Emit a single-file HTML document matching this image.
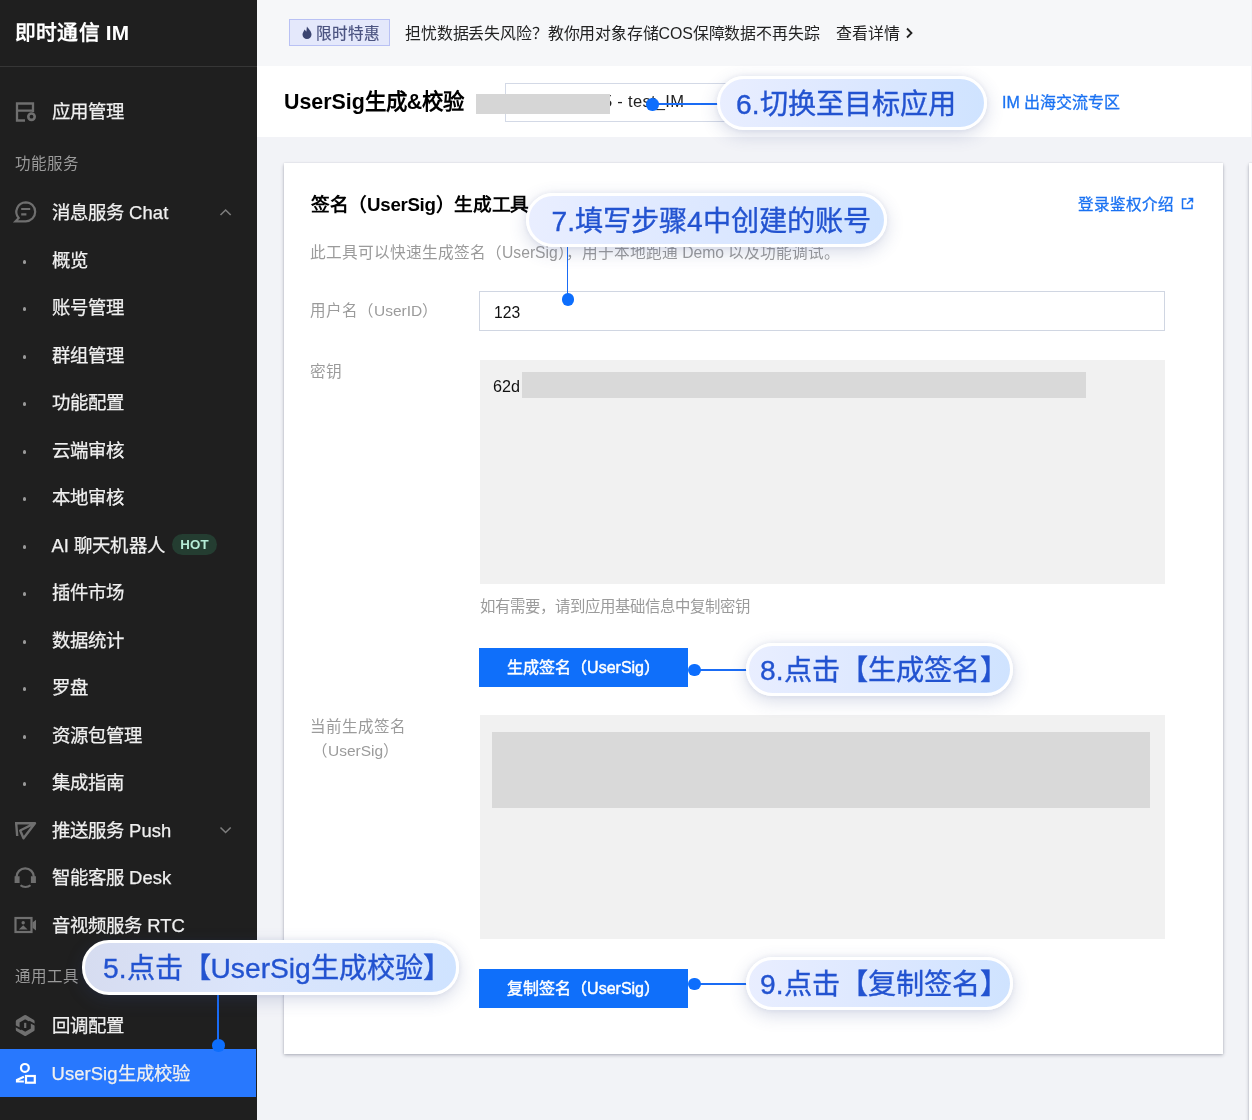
<!DOCTYPE html>
<html lang="zh-CN">
<head>
<meta charset="utf-8">
<title>UserSig</title>
<style>
*{box-sizing:border-box;margin:0;padding:0}
html,body{width:1252px;height:1120px;overflow:hidden}
body{font-family:"Liberation Sans",sans-serif;background:#f2f3f7;position:relative;color:#000}
.abs{position:absolute}
#root{position:absolute;left:0;top:0;width:1252px;height:1120px;will-change:transform}
/* sidebar */
#side{position:absolute;left:0;top:0;width:257px;height:1120px;background:#1f1f1f;color:#fff}
#side .title{position:absolute;left:15px;top:19px;font-size:20.8px;font-weight:bold;line-height:28px;letter-spacing:.2px}
#side .hr{position:absolute;left:0;top:66px;width:257px;height:1px;background:#363636}
.mi{position:absolute;left:51.500px;margin-top:.5px;letter-spacing:.1px;font-size:18.4px;-webkit-text-stroke:.25px #f0f0f0;line-height:24px;color:#f0f0f0;white-space:nowrap;transform:translateY(-50%)}
.grp{position:absolute;left:15px;font-size:15.5px;line-height:20px;color:#9a9a9a;transform:translateY(-50%)}
.dot{position:absolute;left:22.500px;margin-top:.8px;width:3.800px;height:3.800px;border-radius:50%;background:#9a9a9a}
.ico{position:absolute;left:14px}
#sel{position:absolute;left:0;top:1049px;width:256px;height:48px;background:#2878fe}
.hot{display:inline-block;vertical-align:2px;margin-left:8px;background:#1e4d3c;color:#d8f5e6;font-size:11px;font-weight:bold;line-height:19px;height:19px;padding:0 7px;border-radius:10px;letter-spacing:.3px}
/* top */
#banner{position:absolute;left:257px;top:0;width:994px;height:66px;background:#f6f7f9}
#head{position:absolute;left:257px;top:66px;width:994px;height:71px;background:#fff}
#card{position:absolute;left:284px;top:163px;width:939px;height:891px;background:#fff;box-shadow:0 1.5px 3.5px rgba(30,35,60,.30),0 0 2px rgba(30,35,60,.12)}
.t{position:absolute;white-space:nowrap;transform:translateY(-50%)}
.gray{color:#9b9b9b}
.blue{color:#1a72f2}
.pill{position:absolute;border-radius:27px;background:linear-gradient(95deg,#e9eeff 0%,#dbe7ff 55%,#cfe3ff 100%);border:3px solid #fff;box-shadow:0 5px 18px rgba(55,75,140,.20),0 0 6px rgba(55,75,140,.08);color:#2353d0;font-size:28.2px;white-space:nowrap;text-align:left;-webkit-text-stroke:.35px #2353d0}
.btn{position:absolute;background:#0f6ffa;color:#fff;font-size:16px;text-align:center;-webkit-text-stroke:.45px #fff}
.ln{position:absolute;background:#1a6cf5}
.pt{position:absolute;width:12.5px;height:12.5px;border-radius:50%;background:#0d6efd}
</style>
</head>
<body>
<div id="root">
<div id="banner"></div>
<div id="head"></div>
<div id="card"></div>

<!-- banner -->
<div class="abs" style="left:289px;top:19px;width:101px;height:27px;background:#e4e8fb;border:1px solid #b9c1f4"></div>
<svg class="abs" style="left:301px;top:26px" width="12" height="14" viewBox="0 0 12 14"><path d="M6 .5C7.500 3 10.500 5 10.500 8.500A4.500 4.500 0 0 1 1.500 8.500C1.500 6.500 3 5.500 3.500 3.500 4.500 4.500 5 5 5.200 5.800 5.800 4 5.500 2 6 .5z" fill="#3b4470"/></svg>
<div class="t" style="left:316px;top:32px;font-size:15.6px;color:#4b5380;-webkit-text-stroke:.2px #4b5380">限时特惠</div>
<div class="t" style="left:405px;top:32px;font-size:15.93px;letter-spacing:-.15px;color:#222">担忧数据丢失风险？教你用对象存储COS保障数据不再失踪</div>
<div class="t" style="left:836px;top:32px;font-size:15.93px;color:#222">查看详情</div>
<svg class="abs" style="left:904px;top:26px" width="10" height="14" viewBox="0 0 10 14" fill="none" stroke="#222" stroke-width="1.800"><path d="M3 2.500l4.500 4.500L3 11.500"/></svg>
<!-- head -->
<div class="t" style="left:284px;top:98.5px;font-size:21.4px;font-weight:bold;color:#000">UserSig生成&amp;校验</div>
<div class="abs" style="left:505px;top:83px;width:240px;height:39px;background:#fff;border:1px solid #d3d9e6"></div>
<div class="t" style="left:603px;top:101px;font-size:16.5px;letter-spacing:.3px;color:#222">5 - test_IM</div>
<div class="abs" style="left:476px;top:94px;width:134px;height:20px;background:#d6d6d6"></div>
<div class="t blue" style="left:1002px;top:100.500px;font-size:16px;-webkit-text-stroke:.3px #1a72f2">IM 出海交流专区</div>
<!-- card -->
<div class="t" style="left:311px;top:202px;font-size:18.7px;letter-spacing:-.3px;font-weight:bold;color:#000">签名（UserSig）生成工具</div>
<div class="t blue" style="left:1078px;top:203px;font-size:15.5px;-webkit-text-stroke:.3px #1a72f2">登录鉴权介绍</div>
<svg class="abs" style="left:1181px;top:197px" width="13" height="13" viewBox="0 0 13 13" fill="none" stroke="#1a72f2" stroke-width="1.500"><path d="M5.500 2H1.500v9.500H11V7.500M7.500 1.500H11.500V5.500M11.500 1.500L6 7"/></svg>
<div class="t gray" style="left:310px;top:250.5px;font-size:15.7px">此工具可以快速生成签名（UserSig），用于本地跑通 Demo 以及功能调试。</div>
<div class="t gray" style="left:310px;top:308.500px;font-size:15.5px">用户名（UserID）</div>
<div class="abs" style="left:479px;top:291px;width:686px;height:40px;background:#fff;border:1px solid #d0d6e2"></div>
<div class="t" style="left:494px;top:313px;font-size:15.700px;color:#111">123</div>
<div class="t gray" style="left:310px;top:370px;font-size:15.7px">密钥</div>
<div class="abs" style="left:480px;top:360px;width:685px;height:224px;background:#f1f1f1"></div>
<div class="t" style="left:493px;top:385.500px;font-size:16.200px;color:#111">62d</div>
<div class="abs" style="left:522px;top:372px;width:564px;height:26px;background:#d9d9d9"></div>
<div class="t gray" style="left:480px;top:605px;font-size:15.400px">如有需要，请到应用基础信息中复制密钥</div>
<div class="btn" style="left:479.300px;top:647.800px;width:208.500px;height:39.300px;line-height:39px">生成签名（UserSig）</div>
<div class="t gray" style="left:310px;top:725px;font-size:15.5px">当前生成签名</div>
<div class="t gray" style="left:312px;top:749px;font-size:15.5px">（UserSig）</div>
<div class="abs" style="left:480px;top:715px;width:685px;height:224px;background:#f1f1f1"></div>
<div class="abs" style="left:492px;top:732px;width:658px;height:75.700px;background:#d9d9d9"></div>
<div class="btn" style="left:479.300px;top:968.600px;width:208.500px;height:39.300px;line-height:39px">复制签名（UserSig）</div>
<!-- right strip -->
<div class="abs" style="left:1249px;top:163px;width:20px;height:980px;background:#fff;box-shadow:0 1.5px 3.5px rgba(30,35,60,.30),0 0 2px rgba(30,35,60,.12)"></div>
<!-- annotations -->
<div class="ln" style="left:652px;top:103.300px;width:66px;height:1.500px"></div><div class="pt" style="left:646px;top:98px"></div>
<div class="pill" style="left:717px;top:76px;width:270px;height:54px;line-height:50px;padding-left:16px">6.切换至目标应用</div>
<div class="ln" style="left:566.800px;top:245px;width:1.500px;height:54px"></div><div class="pt" style="left:561.500px;top:293px"></div>
<div class="pill" style="left:526px;top:192.500px;width:361px;height:54px;line-height:50px;padding-left:22.500px">7.填写步骤4中创建的账号</div>
<div class="ln" style="left:694px;top:669px;width:53px;height:1.500px"></div><div class="pt" style="left:688px;top:663.500px"></div>
<div class="pill" style="left:746px;top:642.500px;width:267px;height:53px;line-height:49px;padding-left:11px">8.点击【生成签名】</div>
<div class="ln" style="left:694px;top:983.200px;width:53px;height:1.500px"></div><div class="pt" style="left:688px;top:977.800px"></div>
<div class="pill" style="left:746px;top:956.500px;width:267px;height:53px;line-height:49px;padding-left:11px">9.点击【复制签名】</div>
<div id="side">
  <div class="title">即时通信 IM</div>
  <div class="hr"></div>
<div class="mi" style="top:111px">应用管理</div>
<div class="grp" style="top:164px">功能服务</div>
<div class="mi" style="top:212px">消息服务 Chat</div>
<div class="dot" style="top:259px"></div><div class="mi" style="top:260px">概览</div>
<div class="dot" style="top:306px"></div><div class="mi" style="top:307px">账号管理</div>
<div class="dot" style="top:354px"></div><div class="mi" style="top:355px">群组管理</div>
<div class="dot" style="top:401px"></div><div class="mi" style="top:402px">功能配置</div>
<div class="dot" style="top:449px"></div><div class="mi" style="top:450px">云端审核</div>
<div class="dot" style="top:496px"></div><div class="mi" style="top:497px">本地审核</div>
<div class="dot" style="top:544px"></div><div class="mi" style="top:545px">AI 聊天机器人</div>
<div class="dot" style="top:591px"></div><div class="mi" style="top:592px">插件市场</div>
<div class="dot" style="top:639px"></div><div class="mi" style="top:640px">数据统计</div>
<div class="dot" style="top:686px"></div><div class="mi" style="top:687px">罗盘</div>
<div class="dot" style="top:734px"></div><div class="mi" style="top:735px">资源包管理</div>
<div class="dot" style="top:781px"></div><div class="mi" style="top:782px">集成指南</div>
<div class="mi" style="top:830px">推送服务 Push</div>
<div class="mi" style="top:877px">智能客服 Desk</div>
<div class="mi" style="top:925px">音视频服务 RTC</div>
<div class="grp" style="top:977px">通用工具</div>
<div class="mi" style="top:1025px">回调配置</div>
<div class="abs" style="left:172px;top:533.500px;width:45px;height:21.600px;border-radius:11px;background:#243d31;color:#b5ecd6;font-size:13.300px;font-weight:bold;line-height:21.600px;text-align:center;letter-spacing:.2px">HOT</div>
<div id="sel"></div><svg class="abs" style="left:0;top:1049px" width="60" height="48" viewBox="0 1049 60 48" fill="none" stroke="#fff" stroke-width="2.200">
<circle cx="24.900" cy="1067.900" r="3.900"/><path d="M23.900 1076.800L17 1080v1.500h6.900"/><rect x="26" y="1076" width="8.800" height="6.700"/></svg>
<div class="mi" style="top:1073px">UserSig生成校验</div>
<svg class="abs" style="left:0;top:0" width="257" height="1120" viewBox="0 0 257 1120" fill="none" stroke="#6f6f6f" stroke-width="2.300">
<path d="M25 120.500H17V103.500h16V112M17 110.700h16"/><circle cx="31.500" cy="116.700" r="3.200" stroke-width="2.600"/>
<path d="M25.700 202.300a9.500 9.500 0 1 1 0 19H15.500l3.200-3.300A9.500 9.500 0 0 1 25.700 202.300z" stroke-width="2.200"/><path d="M21.200 209h9M21.200 214.400h5.200" stroke-width="2.200"/>
<path d="M220.500 215l5.100-5 5.100 5" stroke="#7d7d7d" stroke-width="1.600"/>
<path d="M220.500 827.500l5.100 5 5.100-5" stroke="#7d7d7d" stroke-width="1.600"/>
<path d="M15 823.200H35L23.500 838.300L20.200 830.500L35 823.200M16.200 823.500l1 12.500" stroke-width="2.400" stroke-linejoin="round"/>
<path d="M16.500 878v-1a8.700 8.700 0 0 1 17.400 0v1" stroke-width="2.200"/><path d="M14.600 876.300h5v6.600h-5zM30.900 876.300h5v6.600h-5z" fill="#6f6f6f" stroke="none"/><path d="M20.500 885.300c2.500 2.200 7.500 2.200 10 0" stroke-width="2"/>
<rect x="15.500" y="918" width="16" height="14" stroke-width="2.200"/><path d="M32.500 922.500l3.500-2.800v10.800l-3.500-2.800z" fill="#6f6f6f" stroke="none"/><circle cx="23.200" cy="922.800" r="1.700" fill="#6f6f6f" stroke="none"/><path d="M18.800 929.500l4.400-4.200 4.400 4.200z" fill="#6f6f6f" stroke="none"/>
<path d="M25.200 1017l7.500 4.300v8.400l-7.500 4.300-7.500-4.300v-8.400z" stroke-width="3.800" stroke-linejoin="round"/><path d="M25.200 1022.800v5.200" stroke-width="2.200"/><path d="M14.500 1025.800l7 3.600M29 1021.600l7 3.600" stroke="#202020" stroke-width="1.800"/>
</svg>
</div>

<div class="ln" style="left:217.300px;top:993px;width:1.500px;height:52px"></div><div class="pt" style="left:212px;top:1039px"></div>
<div class="pill" style="left:82px;top:940px;width:376.500px;height:54.500px;line-height:50px;padding-left:18px;background:linear-gradient(95deg,#d6dcf0 0%,#dbe5fb 45%,#cfe3ff 100%)">5.点击【UserSig生成校验】</div>
</div>
</body>
</html>
